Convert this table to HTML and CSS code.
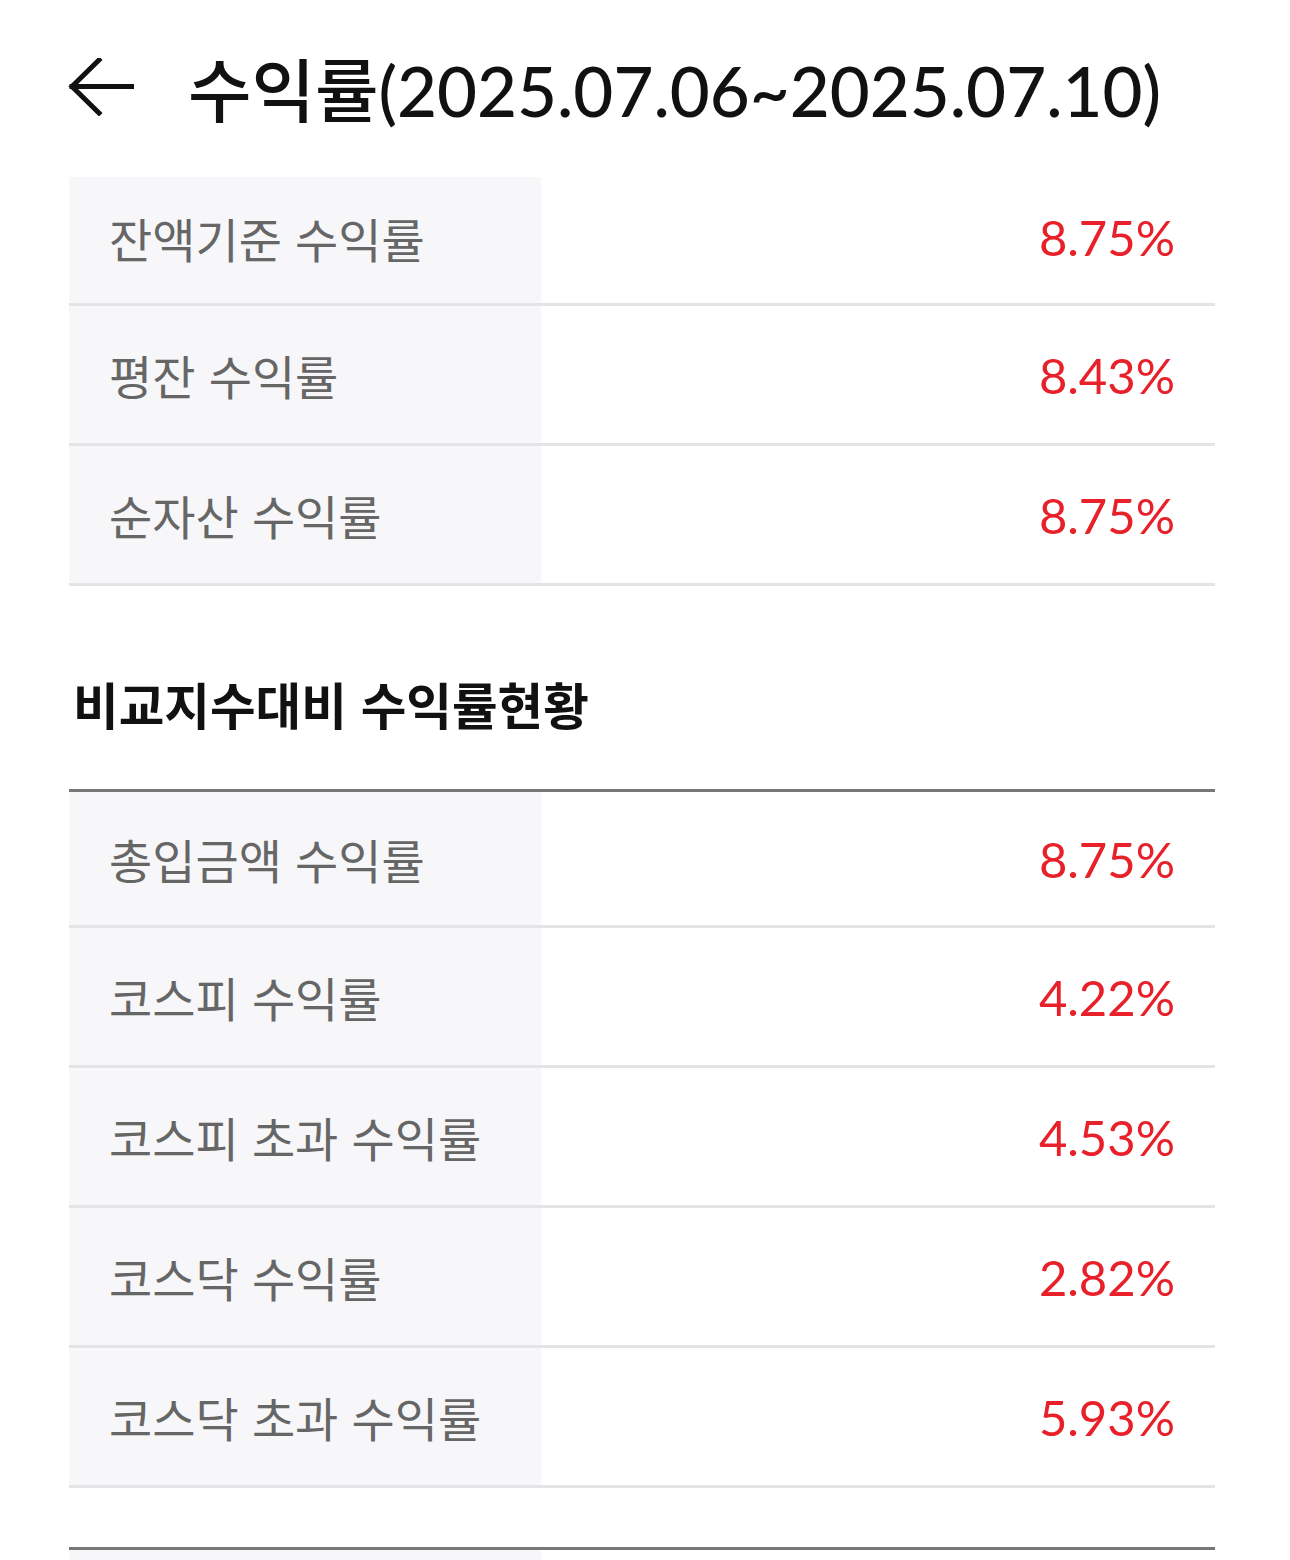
FILE: index.html
```html
<!DOCTYPE html>
<html lang="ko">
<head>
<meta charset="utf-8">
<link rel="stylesheet" href="styles.css">
</head>
<body>
<div class="page">
  <header class="header">
    <svg class="back" width="66" height="58" viewBox="0 0 66 58">
      <path d="M64 28.5H4M31 2L4 28.5L31 55" fill="none" stroke="#111" stroke-width="5" stroke-linecap="square" stroke-linejoin="miter"/>
    </svg>
    <h1 class="title">수익률(2025.07.06~2025.07.10)</h1>
  </header>

  <div class="table first">
    <div class="row"><div class="label">잔액기준 수익률</div><div class="value">8.75%</div></div>
    <div class="row"><div class="label">평잔 수익률</div><div class="value">8.43%</div></div>
    <div class="row"><div class="label">순자산 수익률</div><div class="value">8.75%</div></div>
  </div>

  <h2 class="section">비교지수대비 수익률현황</h2>

  <div class="table boxed">
    <div class="row"><div class="label">총입금액 수익률</div><div class="value">8.75%</div></div>
    <div class="row"><div class="label">코스피 수익률</div><div class="value">4.22%</div></div>
    <div class="row"><div class="label">코스피 초과 수익률</div><div class="value">4.53%</div></div>
    <div class="row"><div class="label">코스닥 수익률</div><div class="value">2.82%</div></div>
    <div class="row"><div class="label">코스닥 초과 수익률</div><div class="value">5.93%</div></div>
  </div>

  <div class="table boxed next">
    <div class="row"><div class="label">&nbsp;</div><div class="value">&nbsp;</div></div>
  </div>
</div>
</body>
</html>
```

FILE: styles.css
```css
html, body {
  margin: 0;
  padding: 0;
  background: #fff;
}
body {
  font-family: Lato, "Noto Sans CJK KR", sans-serif;
  color: #111;
}
.page {
  padding: 0 75px 0 69px;
}
.header {
  display: flex;
  align-items: center;
  height: 177px;
  padding-bottom: 4px;
  box-sizing: border-box;
}
.back {
  display: block;
  margin-left: -1px;
  flex: none;
}
.title {
  margin: 0 0 0 54px;
  font-size: 69px;
  font-weight: 500;
  color: #111;
  white-space: nowrap;
}
.table {
  display: flex;
  flex-direction: column;
}
.row {
  display: grid;
  grid-template-columns: 472px 1fr;
  height: 137px;
  border-bottom: 3px solid #e3e4e6;
}
.first .row:first-child {
  height: 126px;
}
.first .row:first-child .label,
.first .row:first-child .value {
  padding-bottom: 6px;
}
.label {
  background: #f7f7f9;
  display: flex;
  align-items: center;
  padding-left: 40px;
  font-family: "Noto Sans CJK KR", sans-serif;
  font-size: 47px;
  color: #666;
}
.value {
  display: flex;
  align-items: center;
  justify-content: flex-end;
  padding-right: 40px;
  font-size: 49px;
  color: #e8202a;
}
.section {
  margin: 0;
  height: 203px;
  box-sizing: border-box;
  padding: 30px 0 0 4px;
  display: flex;
  align-items: center;
  font-family: "Noto Sans CJK KR", sans-serif;
  font-size: 49.6px;
  font-weight: 700;
  color: #111;
}
.boxed {
  border-top: 3px solid #777;
}
.boxed .row:first-child {
  height: 133px;
}
.next {
  margin-top: 59px;
}
```
